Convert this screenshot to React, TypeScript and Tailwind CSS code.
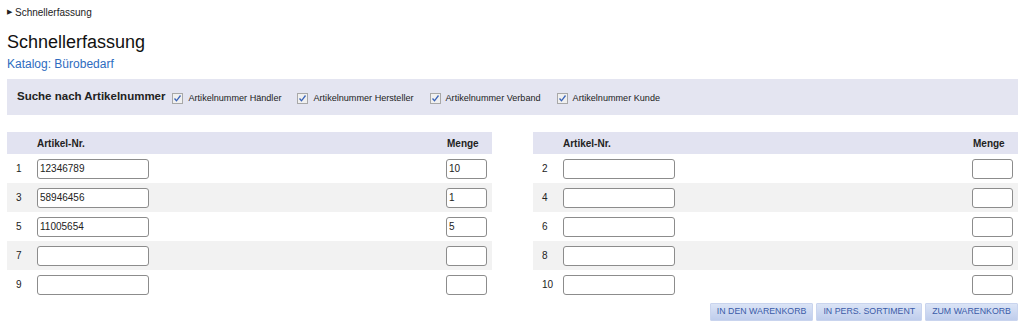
import React from "react";

const rowsLeft = [
  { n: 1, art: "12346789", qty: "10" },
  { n: 3, art: "58946456", qty: "1" },
  { n: 5, art: "11005654", qty: "5" },
  { n: 7, art: "", qty: "" },
  { n: 9, art: "", qty: "" },
];
const rowsRight = [
  { n: 2, art: "", qty: "" },
  { n: 4, art: "", qty: "" },
  { n: 6, art: "", qty: "" },
  { n: 8, art: "", qty: "" },
  { n: 10, art: "", qty: "" },
];

function Check({ label }: { label: string }) {
  return (
    <label className="flex items-center gap-[5px] mt-[3px]">
      <span className="w-[11px] h-[11px] border border-[#a8a8a8] bg-[#f0f0f0] flex items-center justify-center">
        <svg width="9" height="9" viewBox="0 0 9 9">
          <path d="M1.5 4.5 L3.5 6.8 L7.5 1.5" fill="none" stroke="#3a63b8" strokeWidth="1.3" />
        </svg>
      </span>
      <span className="text-[9.1px] text-[#222]">{label}</span>
    </label>
  );
}

function Table({ rows }: { rows: { n: number; art: string; qty: string }[] }) {
  return (
    <div className="flex-1 flex flex-col">
      <div className="h-[22px] bg-[#e2e3f1] flex items-center text-[10px] font-bold text-[#222]">
        <div className="w-[30px]" />
        <div className="flex-1">Artikel-Nr.</div>
        <div className="w-[46px] pl-[1px]">Menge</div>
      </div>
      {rows.map((r, i) => (
        <div
          key={r.n}
          className={`h-[29px] flex items-center text-[10px] text-[#222] ${i % 2 === 1 ? "bg-[#f2f2f2]" : "bg-white"}`}
        >
          <div className="w-[30px] pl-[9px]">{r.n}</div>
          <div className="flex-1">
            <input
              readOnly
              value={r.art}
              className="w-[112px] h-[20px] border border-[#8c8c8c] rounded-[3px] bg-white px-[2px] text-[10px] text-[#222] outline-none"
            />
          </div>
          <div className="w-[46px]">
            <input
              readOnly
              value={r.qty}
              className="w-[41px] h-[20px] border border-[#8c8c8c] rounded-[3px] bg-white px-[2px] text-[10px] text-[#222] outline-none"
            />
          </div>
        </div>
      ))}
    </div>
  );
}

function Btn({ children }: { children: React.ReactNode }) {
  return (
    <button className="h-[18px] px-[6px] text-[8.8px] text-[#3a5ba8] bg-gradient-to-b from-[#dbe4f6] to-[#bfcdec] border border-[#c9d4ee] rounded-[1px] uppercase">
      {children}
    </button>
  );
}

export default function App() {
  return (
    <div className="w-[1024px] h-[326px] bg-white pl-[7px] pr-[6px] font-['Liberation_Sans',Arial,sans-serif] text-[#222]">
      <div className="h-[24px] flex items-center text-[10px] pt-[1px]">
        <span className="text-[7px] mr-[3px]">▶</span>
        <span>Schnellerfassung</span>
      </div>
      <h1 className="text-[18px] leading-[22px] mt-[7px] text-[#111]">Schnellerfassung</h1>
      <div className="text-[12px] leading-[14px] mt-[4px] text-[#2e6cc0]">Katalog: Bürobedarf</div>
      <div className="mt-[8px] h-[36px] bg-[#e4e5f1] flex items-center pl-[10px]">
        <span className="font-bold text-[11.5px] text-[#222] mr-[7px]">Suche nach Artikelnummer</span>
        <div className="flex items-center gap-[16px]">
          <Check label="Artikelnummer Händler" />
          <Check label="Artikelnummer Hersteller" />
          <Check label="Artikelnummer Verband" />
          <Check label="Artikelnummer Kunde" />
        </div>
      </div>
      <div className="mt-[17px] flex gap-[41px]">
        <Table rows={rowsLeft} />
        <Table rows={rowsRight} />
      </div>
      <div className="mt-[4px] flex justify-end gap-[3px]">
        <Btn>In den Warenkorb</Btn>
        <Btn>In pers. Sortiment</Btn>
        <Btn>Zum Warenkorb</Btn>
      </div>
    </div>
  );
}
